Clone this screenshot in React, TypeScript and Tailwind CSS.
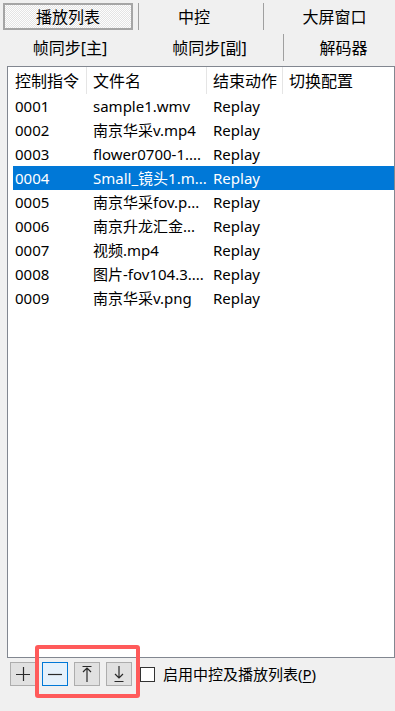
import React from "react";

const rows = [
  { id: "0001", name: "sample1.wmv" },
  { id: "0002", name: "南京华采v.mp4" },
  { id: "0003", name: "flower0700-1...." },
  { id: "0004", name: "Small_镜头1.m..." },
  { id: "0005", name: "南京华采fov.p..." },
  { id: "0006", name: "南京升龙汇金..." },
  { id: "0007", name: "视频.mp4" },
  { id: "0008", name: "图片-fov104.3...." },
  { id: "0009", name: "南京华采v.png" },
];

const SELECTED = "0004";

function ToolButton({ active, children }: { active?: boolean; children: React.ReactNode }) {
  return (
    <button
      className={
        "flex h-[24px] w-[26px] items-center justify-center border " +
        (active ? "border-[#0078d7] bg-[#e5f1fb]" : "border-[#adadad] bg-[#e1e1e1]")
      }
    >
      {children}
    </button>
  );
}

function Sep() {
  return <div className="my-[3px] w-px self-stretch bg-[#a0a0a0]" />;
}

export default function App() {
  return (
    <div className="relative flex h-[711px] w-[395px] flex-col overflow-hidden bg-[#f0f0f0] font-['Noto_Sans','Noto_Sans_CJK_SC',sans-serif] text-[16px] text-black">
      {/* tab rows */}
      <div className="flex h-[33px]">
        <div className="flex w-[138px] py-[3px] pl-[3px] pr-[5px]">
          <div className="flex flex-1 items-center justify-center border-2 border-[#a5a5a5] bg-[repeating-conic-gradient(#e4e4e4_0%_25%,#fdfdfd_0%_50%)] bg-[length:2px_2px]">
            播放列表
          </div>
        </div>
        <Sep />
        <div className="flex w-[124px] items-center justify-center pr-[14px]">中控</div>
        <Sep />
        <div className="flex flex-1 items-center justify-center pl-[10px]">大屏窗口</div>
      </div>
      <div className="flex h-[29px]">
        <div className="flex w-[140px] items-center justify-center">帧同步[主]</div>
        <div className="flex w-[143px] items-center justify-center pr-[4px]">帧同步[副]</div>
        <div className="my-[1px] w-px self-stretch bg-[#a0a0a0]" />
        <div className="flex flex-1 items-center justify-center pl-[8px]">解码器</div>
      </div>

      {/* list view */}
      <div className="ml-[7px] mt-[4px] flex h-[592px] w-[388px] flex-col border border-[#828790] bg-white">
        <div className="flex h-[27px] items-center whitespace-nowrap">
          <div className="flex h-full w-[79px] items-center border-r border-[#e5e5e5] pl-[7px]">控制指令</div>
          <div className="flex h-full w-[120px] items-center border-r border-[#e5e5e5] pl-[6px]">文件名</div>
          <div className="flex h-full w-[76px] items-center border-r border-[#e5e5e5] pl-[6px]">结束动作</div>
          <div className="flex h-full flex-1 items-center pl-[6px]">切换配置</div>
        </div>
        {rows.map((r) => {
          const sel = r.id === SELECTED;
          return (
            <div
              key={r.id}
              className={
                "ml-[5px] flex h-[24px] items-center whitespace-nowrap text-[15px] " +
                (sel ? "bg-[#0078d7] text-white" : "")
              }
            >
              <div className="w-[74px] pl-[2px]">{r.id}</div>
              <div className="w-[120px] overflow-hidden pl-[6px]">{r.name}</div>
              <div className="w-[76px] pl-[6px]">Replay</div>
            </div>
          );
        })}
      </div>

      {/* bottom toolbar */}
      <div className="mt-[4px] flex items-center gap-[6px] pl-[10px]">
        <ToolButton>
          <svg width="16" height="16" viewBox="0 0 16 16" stroke="#2a2a2a" strokeWidth="1.2" fill="none">
            <path d="M1 8.5h14M8.5 1v14" />
          </svg>
        </ToolButton>
        <ToolButton active>
          <svg width="16" height="16" viewBox="0 0 16 16" stroke="#2a2a2a" strokeWidth="1.2" fill="none">
            <path d="M1 8.5h14" />
          </svg>
        </ToolButton>
        <ToolButton>
          <svg width="14" height="18" viewBox="0 0 14 18" stroke="#2a2a2a" strokeWidth="1.2" fill="none">
            <path d="M2.5 1.5h9M7 3v14M3 7l4-4 4 4" />
          </svg>
        </ToolButton>
        <ToolButton>
          <svg width="14" height="18" viewBox="0 0 14 18" stroke="#2a2a2a" strokeWidth="1.2" fill="none">
            <path d="M7 1v12M3 9l4 4 4-4M2.5 16.5h9" />
          </svg>
        </ToolButton>
        <div className="ml-[2px] flex items-center gap-[8px]">
          <div className="h-[15px] w-[15px] border border-[#333333] bg-white" />
          <span className="text-[15px]">
            启用中控及播放列表(<span className="underline underline-offset-2">P</span>)
          </span>
        </div>
      </div>

      {/* annotation highlight */}
      <div className="pointer-events-none absolute left-[35px] top-[645px] h-[53px] w-[105px] rounded-[3px] border-[4px] border-[#ff5a5a]" />
    </div>
  );
}
